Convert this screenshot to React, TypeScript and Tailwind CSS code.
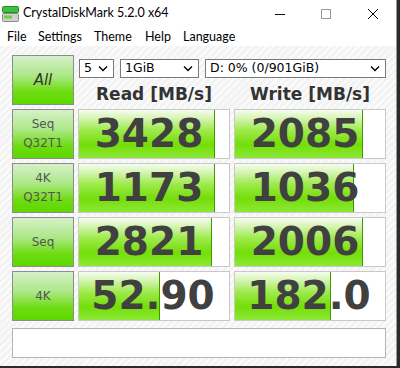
import React from "react";

const rows = [
  { label: ["Seq", "Q32T1"], read: "3428", readW: 136, write: "2085", writeW: 128 },
  { label: ["4K", "Q32T1"], read: "1173", readW: 136, write: "1036", writeW: 119 },
  { label: ["Seq"], read: "2821", readW: 133, write: "2006", writeW: 128 },
  { label: ["4K"], read: "52.90", readW: 81, write: "182.0", writeW: 96 },
];

const Chevron = () => (
  <svg width="10" height="7" viewBox="0 0 10 7" className="shrink-0">
    <path d="M1 1.5 L5 5.5 L9 1.5" fill="none" stroke="#000" strokeWidth="1.4" />
  </svg>
);

const SelectBox = ({ text, className }: { text: string; className: string }) => (
  <div
    className={`h-[19px] bg-white border border-[#7a7a7a] flex items-center justify-between pl-[4px] pr-[5px] text-[12.5px] text-black font-['DejaVu_Sans',sans-serif] ${className}`}
  >
    <span>{text}</span>
    <Chevron />
  </div>
);

const ValueCell = ({ value, width }: { value: string; width: number }) => (
  <div className="relative h-[50px] w-[152px] bg-white border border-[#c8c8c8] overflow-hidden">
    <div
      className="absolute left-0 top-0 bottom-0 bg-[linear-gradient(to_bottom,#f6fdf0_0%,#d8f5b8_16%,#9eea4c_42%,#74de08_72%,#8ce836_100%)] border-r border-[#3c9a00]"
      style={{ width }}
    />
    <div
      className={`relative h-full flex items-center justify-center text-[39px] font-bold text-[#404040] font-['DejaVu_Sans',sans-serif] ${
        value.length === 4 ? "pr-[10px]" : "pr-[2px]"
      }`}
    >
      {value}
    </div>
  </div>
);

const greenBtn =
  "h-[50px] w-[62px] border border-[#8c8c8c] bg-[linear-gradient(to_bottom,#d6f0c8_0%,#aee88a_40%,#6edc10_75%,#5cd800_100%)]";

const LabelBtn = ({ lines }: { lines: string[] }) => (
  <div
    className={`${greenBtn} flex flex-col items-center justify-center text-[12px] leading-[19px] text-[#555] font-['DejaVu_Sans',sans-serif]`}
  >
    {lines.map((l) => (
      <span key={l}>{l}</span>
    ))}
  </div>
);

export default function App() {
  return (
    <div className="w-[400px] h-[368px] bg-[#2a2a2a] overflow-hidden font-['Lato',sans-serif]">
      <div className="w-[397px] h-[366px] bg-white border-r border-[#9a9a9a] flex flex-col">
        {/* Title bar */}
        <div className="h-[25px] flex items-center shrink-0">
          <svg width="17" height="16" viewBox="0 0 17 16" className="ml-[2px] mt-[3px]">
            <rect x="0.5" y="0.5" width="16" height="6" rx="1" fill="#3cc23c" stroke="#2a8a2a" />
            <rect x="0.5" y="7.5" width="16" height="8" rx="1" fill="#d0d0d0" stroke="#8a8a8a" />
            <rect x="2" y="9.5" width="8" height="3" fill="#6fcf3f" />
          </svg>
          <span className="ml-[4px] mt-[2px] text-[12.5px] text-black">CrystalDiskMark 5.2.0 x64</span>
          <div className="flex-1" />
          <svg width="12" height="12" viewBox="0 0 12 12" className="mr-[33px] mt-[2px]">
            <line x1="0" y1="6.5" x2="10" y2="6.5" stroke="#000" strokeWidth="1" />
          </svg>
          <svg width="12" height="12" viewBox="0 0 12 12" className="mr-[35px] mt-[2px]">
            <rect x="1.5" y="1.5" width="9" height="9" fill="none" stroke="#999" strokeWidth="1" />
          </svg>
          <svg width="12" height="12" viewBox="0 0 12 12" className="mr-[17px] mt-[2px]">
            <path d="M1 1 L11 11 M11 1 L1 11" stroke="#000" strokeWidth="1" />
          </svg>
        </div>

        {/* Menu bar */}
        <div className="h-[21px] flex items-center pt-[4px] text-[12.5px] text-black shrink-0 pl-[7px]">
          <span className="w-[31px]">File</span>
          <span className="w-[56px]">Settings</span>
          <span className="w-[51px]">Theme</span>
          <span className="w-[38px]">Help</span>
          <span>Language</span>
        </div>

        {/* Main area */}
        <div className="flex-1 pt-[9px] pl-[12px] bg-[repeating-linear-gradient(135deg,#f3f3f3_0px,#f3f3f3_3px,#fbfbfb_3px,#fbfbfb_5px)]">
          <div className="flex flex-col gap-[4px]">
            {/* Header row */}
            <div className="flex">
              <div
                className={`${greenBtn} flex items-center justify-center text-[15px] italic text-[#333] font-['DejaVu_Sans',sans-serif]`}
              >
                All
              </div>
              <div className="ml-[4px] flex flex-col">
                <div className="flex mt-[4px]">
                  <SelectBox text="5" className="ml-[1px] w-[35px]" />
                  <SelectBox text="1GiB" className="ml-[6px] w-[79px]" />
                  <SelectBox text="D: 0% (0/901GiB)" className="ml-[6px] w-[181px]" />
                </div>
                <div className="flex mt-[6px] text-[17px] font-bold text-[#333] font-['DejaVu_Sans',sans-serif] leading-[20px]">
                  <div className="w-[152px] text-center">Read [MB/s]</div>
                  <div className="w-[152px] ml-[4px] text-center">Write [MB/s]</div>
                </div>
              </div>
            </div>

            {rows.map((r) => (
              <div key={r.read} className="flex">
                <LabelBtn lines={r.label} />
                <div className="ml-[4px]">
                  <ValueCell value={r.read} width={r.readW} />
                </div>
                <div className="ml-[4px]">
                  <ValueCell value={r.write} width={r.writeW} />
                </div>
              </div>
            ))}
          </div>

          <div className="mt-[7px] w-[374px] h-[30px] bg-white border border-[#b4b4b4]" />
        </div>
      </div>
    </div>
  );
}
